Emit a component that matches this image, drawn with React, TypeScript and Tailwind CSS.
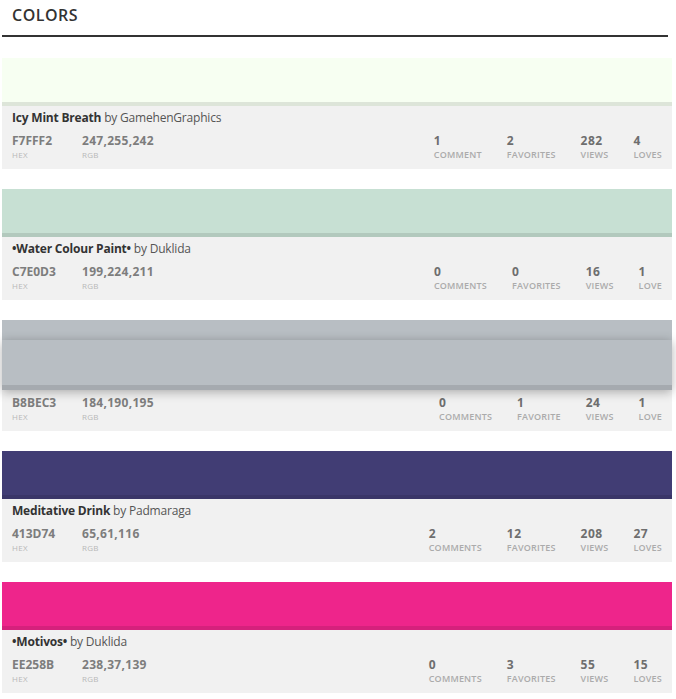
import React from 'react';

interface Palette {
  name: string;
  author: string;
  hex: string;
  rgb: string;
  stats: { value: number; label: string }[];
  hovered?: boolean;
}

const COLORS: Palette[] = [
  {
    name: 'Icy Mint Breath',
    author: 'GamehenGraphics',
    hex: 'F7FFF2',
    rgb: '247,255,242',
    stats: [
      { value: 1, label: 'Comment' },
      { value: 2, label: 'Favorites' },
      { value: 282, label: 'Views' },
      { value: 4, label: 'Loves' },
    ],
  },
  {
    name: '•Water Colour Paint•',
    author: 'Duklida',
    hex: 'C7E0D3',
    rgb: '199,224,211',
    stats: [
      { value: 0, label: 'Comments' },
      { value: 0, label: 'Favorites' },
      { value: 16, label: 'Views' },
      { value: 1, label: 'Love' },
    ],
  },
  {
    name: 'Silver Mist',
    author: 'Duklida',
    hex: 'B8BEC3',
    rgb: '184,190,195',
    hovered: true,
    stats: [
      { value: 0, label: 'Comments' },
      { value: 1, label: 'Favorite' },
      { value: 24, label: 'Views' },
      { value: 1, label: 'Love' },
    ],
  },
  {
    name: 'Meditative Drink',
    author: 'Padmaraga',
    hex: '413D74',
    rgb: '65,61,116',
    stats: [
      { value: 2, label: 'Comments' },
      { value: 12, label: 'Favorites' },
      { value: 208, label: 'Views' },
      { value: 27, label: 'Loves' },
    ],
  },
  {
    name: '•Motivos•',
    author: 'Duklida',
    hex: 'EE258B',
    rgb: '238,37,139',
    stats: [
      { value: 0, label: 'Comments' },
      { value: 3, label: 'Favorites' },
      { value: 55, label: 'Views' },
      { value: 15, label: 'Loves' },
    ],
  },
];

function ColorCard({ c }: { c: Palette }) {
  return (
    <div className="relative bg-[#f1f1f1]">
      {/* swatch + darker strip */}
      <div className="h-[48px] border-b-4 border-black/10" style={{ backgroundColor: `#${c.hex}` }} />
      {c.hovered && (
        <div
          className="absolute left-0 right-0 top-[20px] h-[50px] border-b-[5px] border-black/10 shadow-[0_2px_10px_rgba(0,0,0,0.3)]"
          style={{ backgroundColor: `#${c.hex}` }}
        />
      )}
      <div className="pl-[10px] pr-[10px] pt-[5px] pb-[8px]">
        <div className="text-[12px] leading-[14px] text-[#555] tracking-[-0.2px]">
          <span className="font-bold text-[#333]">{c.name}</span> by {c.author}
        </div>
        <div className="mt-[8px] flex items-start">
          <div className="w-[70px]">
            <div className="text-[12px] leading-[16px] font-bold text-[#7d7d7d]">{c.hex}</div>
            <div className="text-[8px] leading-[12px] text-[#b8b8b8] uppercase tracking-[0.3px]">Hex</div>
          </div>
          <div>
            <div className="text-[12px] leading-[16px] font-bold text-[#7d7d7d] tracking-[0.3px]">{c.rgb}</div>
            <div className="text-[8px] leading-[12px] text-[#b8b8b8] uppercase tracking-[0.3px]">Rgb</div>
          </div>
          <div className="ml-auto flex gap-[25px]">
            {c.stats.map((s) => (
              <div key={s.label}>
                <div className="text-[12px] leading-[16px] font-bold text-[#6e6e6e] tracking-[0.5px]">{s.value}</div>
                <div className="text-[9px] leading-[12px] font-semibold text-[#ababab] uppercase tracking-[0.2px]">
                  {s.label}
                </div>
              </div>
            ))}
          </div>
        </div>
      </div>
    </div>
  );
}

export default function App() {
  return (
    <div className="w-[676px] h-[699px] bg-white overflow-hidden" style={{ fontFamily: '"Open Sans", sans-serif' }}>
      <div className="pl-[12px] pt-[5px] pb-[10px] text-[16px] leading-[20px] font-semibold text-[#333] tracking-[0.5px]">
        COLORS
      </div>
      <div className="ml-[2px] w-[666px] h-[2px] bg-[#333]" />
      <div className="mt-[21px] ml-[2px] w-[670px] flex flex-col gap-[20px]">
        {COLORS.map((c) => (
          <ColorCard key={c.hex} c={c} />
        ))}
      </div>
    </div>
  );
}
